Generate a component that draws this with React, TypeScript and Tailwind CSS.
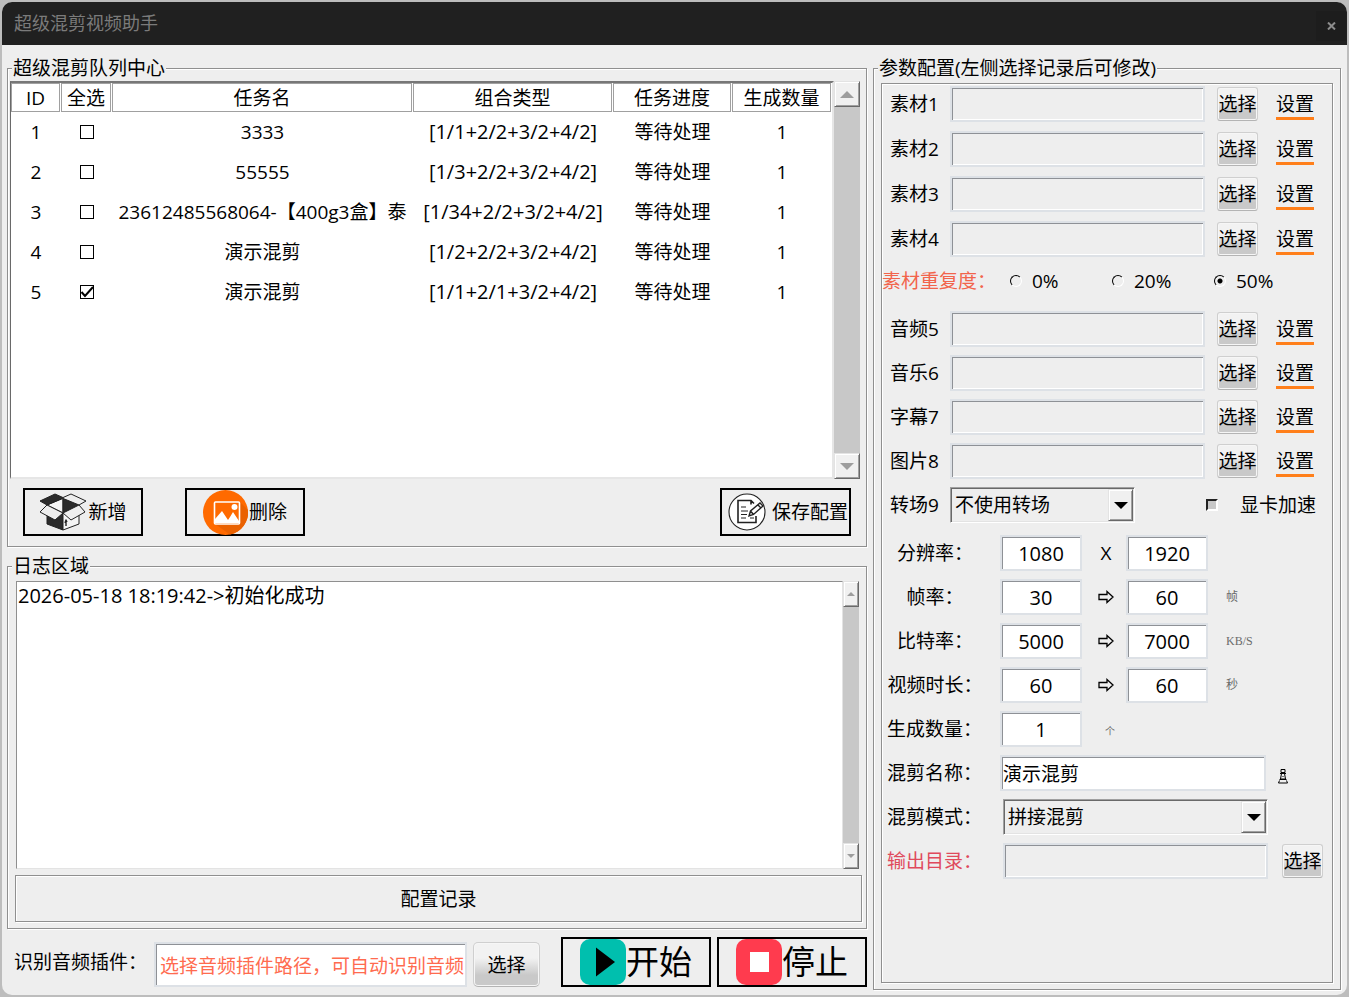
import { useState } from "react";
import type { ReactNode } from "react";

interface Task {
  id: number;
  name: string;
  combo: string;
  status: string;
  count: number;
}

const TASKS: Task[] = [
  { id: 1, name: "3333", combo: "[1/1+2/2+3/2+4/2]", status: "等待处理", count: 1 },
  { id: 2, name: "55555", combo: "[1/3+2/2+3/2+4/2]", status: "等待处理", count: 1 },
  { id: 3, name: "23612485568064-【400g3盒】泰", combo: "[1/34+2/2+3/2+4/2]", status: "等待处理", count: 1 },
  { id: 4, name: "演示混剪", combo: "[1/2+2/2+3/2+4/2]", status: "等待处理", count: 1 },
  { id: 5, name: "演示混剪", combo: "[1/1+2/1+3/2+4/2]", status: "等待处理", count: 1 },
];

const COLUMNS = [
  { title: "ID", width: "w-[50px]" },
  { title: "全选", width: "w-[51px]" },
  { title: "任务名", width: "w-[301px]" },
  { title: "组合类型", width: "w-[200px]" },
  { title: "任务进度", width: "w-[119px]" },
  { title: "生成数量", width: "w-auto" },
];

const MATERIALS = ["素材1", "素材2", "素材3", "素材4"];
const EXTRAS = ["音频5", "音乐6", "字幕7", "图片8"];
const RANGES = [
  { label: "分辨率：", from: "1080", to: "1920", unit: "" },
  { label: "帧率：", from: "30", to: "60", unit: "帧" },
  { label: "比特率：", from: "5000", to: "7000", unit: "KB/S" },
  { label: "视频时长：", from: "60", to: "60", unit: "秒" },
];

const SUNKEN =
  "border-2 border-[#dde1e6] shadow-[inset_1px_1px_0_#8e9196,inset_-1px_-1px_0_#fff] outline-none";
const RAISED =
  "border border-t-[#e3e3e3] border-l-[#e3e3e3] border-b-[#696969] border-r-[#696969] bg-[#f0f0f0] shadow-[inset_1px_1px_0_#fff,inset_-1px_-1px_0_#a0a0a0]";
const ETCHED = "border border-[#8f8f8f] shadow-[1px_1px_0_#fff,inset_1px_1px_0_#fff]";

function Group({ title, className, children }: { title: string; className?: string; children: ReactNode }) {
  return (
    <fieldset className={`flex min-w-0 flex-col ${ETCHED} ${className ?? ""}`}>
      <legend className="ml-1 bg-[#eeeeee] px-px leading-[22px]">{title}</legend>
      {children}
    </fieldset>
  );
}

function ScrollBar({ narrow }: { narrow?: boolean }) {
  const arrow = narrow ? "h-1 w-2" : "h-[7px] w-3.5";
  return (
    <div className={`flex shrink-0 flex-col justify-between bg-[#c8c8c8] ${narrow ? "w-4" : "w-[26px]"}`}>
      <button aria-label="向上滚动" className={`flex h-[26px] items-center justify-center ${RAISED}`}>
        <svg viewBox="0 0 14 7" className={arrow}><path d="M0 7 7 0l7 7z" fill="#9d9d9d" /></svg>
      </button>
      <button aria-label="向下滚动" className={`flex h-[26px] items-center justify-center ${RAISED}`}>
        <svg viewBox="0 0 14 7" className={arrow}><path d="M0 0h14L7 7z" fill="#9d9d9d" /></svg>
      </button>
    </div>
  );
}

function PickButton({ label }: { label: string }) {
  return (
    <button
      aria-label={label}
      className="h-[34px] w-[41px] shrink-0 rounded-[3px] border border-[#cfcfcf] border-b-[#b4b4b4] bg-linear-to-b from-[#f2f2f2] from-35% to-[#c9c9c9] to-75% whitespace-nowrap shadow-[inset_0_0_0_1px_#f6f6f6]"
    >
      选择
    </button>
  );
}

function FileRow({ label }: { label: string }) {
  return (
    <div className="flex h-9 items-center pr-[18px] pl-2">
      <label htmlFor={label} className="w-[60px] shrink-0">{label}</label>
      <input id={label} readOnly className={`h-9 min-w-0 flex-1 bg-[#eeeeee] px-1 ${SUNKEN}`} />
      <div className="ml-3 flex items-center gap-[18px]">
        <PickButton label={`选择${label}`} />
        <a href="#" className="border-b-3 border-[#ff7f1a] pt-0.5 leading-[26px] whitespace-nowrap">设置</a>
      </div>
    </div>
  );
}

function Dropdown({ id, options, className }: { id: string; options: string[]; className: string }) {
  return (
    <div className={`relative h-9 ${className}`}>
      <select
        id={id}
        className="h-full w-full appearance-none border border-t-[#a0a0a0] border-r-white border-b-white border-l-[#a0a0a0] bg-[#eeeeee] pr-7 pl-1 shadow-[inset_1px_1px_0_#696969,inset_-1px_-1px_0_#e3e3e3] outline-none"
      >
        {options.map(o => <option key={o}>{o}</option>)}
      </select>
      <div className={`pointer-events-none absolute inset-y-0.5 right-0.5 flex w-[25px] items-center justify-center ${RAISED}`}>
        <svg viewBox="0 0 14 7" className="h-[7px] w-3.5"><path d="M0 0h14L7 7z" /></svg>
      </div>
    </div>
  );
}

function NumberBox({ id, value, label }: { id?: string; value: string; label?: string }) {
  return (
    <input
      id={id}
      aria-label={label}
      defaultValue={value}
      className={`h-9 w-[82px] shrink-0 bg-white text-center text-[20px] ${SUNKEN}`}
    />
  );
}

function BoxIcon() {
  return (
    <svg viewBox="0 0 48 38" className="h-[38px] w-12" stroke="#222" strokeWidth="1" strokeLinejoin="round">
      <path d="M8 17v14l16 6V18z" fill="#2b2b2b" />
      <path d="M40 17v14l-16 6V18z" fill="#f5f5f5" />
      <path d="M24 5v15L8 12z" fill="#f5f5f5" />
      <path d="M24 5v15l16-8z" fill="#2b2b2b" />
      <path d="M1 8 16 1l9 4L8 12z" fill="#2b2b2b" />
      <path d="M23 5l9-4 15 7-7 4z" fill="#eee" />
      <path d="M8 12l16 8-8 7L1 19z" fill="#eee" />
      <path d="M40 12l-16 8 8 7 14-8z" fill="#eee" />
      <path d="M27 33v-5m-1 2 1-3 1 2" fill="none" strokeWidth="1.4" />
    </svg>
  );
}

function PictureIcon() {
  return (
    <svg viewBox="0 0 45 45" className="size-[45px]">
      <circle cx="22.5" cy="22.5" r="22.5" fill="#ff6a00" />
      <path d="M37 12 45 20A22.5 22.5 0 0 1 27 44.500L12 34z" fill="#ea6100" />
      <rect x="11.5" y="12" width="25" height="22" rx="1" fill="#ff6a00" stroke="#fff" strokeWidth="1.6" />
      <circle cx="31.500" cy="17" r="3" fill="#fff" />
      <path d="M12 33v-4l7-8 6 9 2-3 3-5 6 9v2z" fill="#fff" />
    </svg>
  );
}

function SaveIcon() {
  return (
    <svg viewBox="0 0 38 38" className="size-[38px]" fill="none" stroke="#222" strokeWidth="1.4">
      <circle cx="19" cy="19" r="18" fill="#fff" strokeWidth="1.1" />
      <path d="M28 23v6.500H10V7.500h13l3 3M23 7.500v4" strokeWidth="1.6" />
      <path d="M13 14h5M13 18h7M13 21.500h6M13 25h5M22 25h4" strokeWidth="1.2" />
      <path d="M21 23l1.500-5L32 10l3 3-9.500 8.500zM30 12l3 3M22.500 18l3 3.500" fill="#fff" />
    </svg>
  );
}

function ArrowIcon() {
  return (
    <svg viewBox="0 0 16 14" className="h-3.5 w-4" fill="none" stroke="#000" strokeWidth="1.3">
      <path d="M1 4.500h8V1.500L15 7l-6 5.500v-3H1z" />
    </svg>
  );
}

function PawnIcon() {
  return (
    <svg viewBox="0 0 10 16" className="h-4 w-2.5" fill="none" stroke="#000">
      <path d="M3 1.500h4v3H3zM2 5.500h6M3.500 5.500 2.500 11h5l-1-5.500M4.500 8.500h1M1.500 11.500h7M1.500 12.500l-1 2.500h9l-1-2.500" />
    </svg>
  );
}

export default function App() {
  const [selected, setSelected] = useState<number[]>([5]);
  const [repeat, setRepeat] = useState("50%");

  const toggle = (id: number) => {
    setSelected(s => (s.includes(id) ? s.filter(x => x !== id) : [...s, id]));
  };

  return (
    <div
      lang="zh-CN"
      className="flex min-h-screen bg-[#bdbdbd] p-0.5 font-['Open_Sans','Noto_Sans_CJK_SC',sans-serif] text-[19px] leading-6 text-black"
    >
      <div className="flex min-w-0 flex-1 flex-col overflow-hidden rounded-[10px] bg-[#eeeeee]">
        <header className="flex h-[43px] items-center justify-between bg-[#202020] pr-px pb-0.5 pl-3">
          <h1 className="text-[18px] text-[#7b7b7b]">超级混剪视频助手</h1>
          <button aria-label="关闭" className="mt-1.5 flex size-[30px] items-center justify-center bg-[#1d1d1d]">
            <svg viewBox="0 0 9 8" className="h-2 w-[9px]" stroke="#8c8c8c" strokeWidth="2">
              <path d="M1 .5 8 7.500M8 .5 1 7.500" />
            </svg>
          </button>
        </header>

        <main className="flex flex-1 gap-1.5 pt-3 pr-1.5 pl-[5px]">
          <div className="flex min-w-0 flex-1 flex-col pb-2">
            {/* Task queue */}
            <Group title="超级混剪队列中心">
              <div className="flex h-[400px] pt-0.5 pr-1.5 pl-0.5">
                <div className="min-w-0 flex-1 overflow-hidden border-y-2 border-r-2 border-l border-t-[#777] border-r-[#e6e6e6] border-b-[#e6e6e6] border-l-[#696969] bg-white">
                  <table className="w-full table-fixed border-separate border-spacing-0 text-center">
                    <thead>
                      <tr>
                        {COLUMNS.map(c => (
                          <th key={c.title} className={`p-0 pr-px font-normal ${c.width}`}>
                            <div className="border border-[#a0a0a0] pt-px leading-[26px] whitespace-nowrap">{c.title}</div>
                          </th>
                        ))}
                      </tr>
                    </thead>
                    <tbody>
                      {TASKS.map(t => (
                        <tr key={t.id} className="h-10">
                          <td className="p-0">{t.id}</td>
                          <td className="p-0">
                            <span className="relative mx-auto block size-3.5">
                              <input
                                type="checkbox"
                                aria-label={`选择任务${t.id}`}
                                checked={selected.includes(t.id)}
                                onChange={() => toggle(t.id)}
                                className="peer block size-3.5 appearance-none border border-black bg-white"
                              />
                              <svg
                                viewBox="0 0 14 14"
                                className="pointer-events-none absolute inset-0 hidden size-3.5 peer-checked:block"
                                fill="none"
                                stroke="#000"
                                strokeWidth="2"
                              >
                                <path d="M1.500 7 5 11l8-9" />
                              </svg>
                            </span>
                          </td>
                          <td className="overflow-hidden p-0 whitespace-nowrap">{t.name}</td>
                          <td className="p-0 text-[20px] whitespace-nowrap">{t.combo}</td>
                          <td className="p-0 whitespace-nowrap">{t.status}</td>
                          <td className="p-0">{t.count}</td>
                        </tr>
                      ))}
                    </tbody>
                  </table>
                </div>
                <ScrollBar />
              </div>
              <div className="flex gap-[42px] pt-[9px] pr-[15px] pb-2.5 pl-[15px]">
                <button className="flex h-12 w-[120px] items-center justify-center gap-px border-2 border-black whitespace-nowrap">
                  <BoxIcon />
                  新增
                </button>
                <button className="flex h-12 w-[120px] items-center justify-center gap-px border-2 border-black whitespace-nowrap">
                  <PictureIcon />
                  删除
                </button>
                <button className="ml-auto flex h-12 w-[131px] items-center gap-1.5 border-2 border-black pl-1.5 whitespace-nowrap">
                  <SaveIcon />
                  保存配置
                </button>
              </div>
            </Group>

            {/* Log */}
            <Group title="日志区域" className="mt-2 flex-1">
              <div className="flex h-full flex-col pt-1 pr-1 pb-1.5 pl-[7px]">
                <div className="flex min-h-[280px] flex-1 pr-[3px] pl-px">
                  <textarea
                    readOnly
                    aria-label="日志区域"
                    defaultValue="2026-05-18 18:19:42->初始化成功"
                    className="min-w-0 flex-1 resize-none overflow-hidden border border-t-[#8f8f8f] border-r-[#e3e3e3] border-b-[#e3e3e3] border-l-[#8f8f8f] bg-white px-px py-0.5 text-[20px] outline-none"
                  />
                  <ScrollBar narrow />
                </div>
                <button className={`mt-1.5 h-[47px] w-full ${ETCHED}`}>配置记录</button>
              </div>
            </Group>

            {/* Audio plugin and run controls */}
            <div className="mt-2 flex items-end gap-1.5 pl-[7px]">
              <label htmlFor="plugin" className="w-[134px] shrink-0 self-center whitespace-nowrap">识别音频插件：</label>
              <input
                id="plugin"
                defaultValue="选择音频插件路径，可自动识别音频"
                className={`h-[45px] min-w-0 flex-1 bg-white pl-1 text-[#ff6b4f] ${SUNKEN}`}
              />
              <button className="h-[45px] w-[67px] rounded-[5px] border border-[#cfcfcf] border-b-[#b4b4b4] bg-linear-to-b from-[#f2f2f2] from-35% to-[#c9c9c9] to-75% shadow-[inset_0_0_0_1px_#f6f6f6]">
                选择
              </button>
              <button className="ml-[15px] flex h-[50px] w-[150px] items-center justify-center border-2 border-black text-[33px] whitespace-nowrap">
                <svg viewBox="0 0 46 46" className="size-[46px]">
                  <rect width="46" height="46" rx="10" fill="#00bfae" />
                  <path d="M16 8.500 35 23 16 37.500z" />
                </svg>
                开始
              </button>
              <button className="flex h-[50px] w-[150px] items-center justify-center border-2 border-black text-[33px] whitespace-nowrap">
                <svg viewBox="0 0 46 46" className="size-[46px]">
                  <rect width="46" height="46" rx="10" fill="#ff3b4e" />
                  <rect x="14" y="13" width="19" height="20" fill="#fff" />
                </svg>
                停止
              </button>
            </div>
          </div>

          {/* Parameters */}
          <div className="flex w-[468px] shrink-0 flex-col pb-[5px]">
            <Group title="参数配置(左侧选择记录后可修改)" className="flex-1">
              <div className={`mx-[7px] mt-1 mb-1.5 flex-1 pt-0.5 ${ETCHED}`}>
                <div className="flex flex-col gap-[9px]">
                  {MATERIALS.map(m => <FileRow key={m} label={m} />)}
                </div>

                <div role="radiogroup" aria-label="素材重复度" className="mt-1.5 flex h-9 items-center">
                  <span className="mr-3.5 w-[114px] shrink-0 whitespace-nowrap text-[#f2644b]">素材重复度：</span>
                  {["0%", "20%", "50%"].map(v => (
                    <label key={v} className="flex w-[102px] items-center gap-2.5">
                      <input
                        type="radio"
                        name="repeat"
                        checked={repeat === v}
                        onChange={() => setRepeat(v)}
                        className="size-3 appearance-none rounded-full border border-t-black border-r-white border-b-white border-l-black checked:bg-[radial-gradient(circle,#000_2px,transparent_3px)]"
                      />
                      {v}
                    </label>
                  ))}
                </div>

                <div className="mt-3 flex flex-col gap-2">
                  {EXTRAS.map(m => <FileRow key={m} label={m} />)}
                  <div className="flex h-9 items-center pl-2">
                    <label htmlFor="transition" className="w-[60px] shrink-0">转场9</label>
                    <Dropdown id="transition" options={["不使用转场", "使用转场"]} className="w-[185px]" />
                    <label className="mr-4 ml-auto flex items-center gap-[22px] whitespace-nowrap">
                      <input
                        type="checkbox"
                        className="size-3 appearance-none border-2 border-t-[#222] border-r-white border-b-white border-l-[#222] bg-[#c8c8c8] checked:bg-black"
                      />
                      显卡加速
                    </label>
                  </div>
                </div>

                <div className="mt-3 flex flex-col gap-2 pl-[5px]">
                  {RANGES.map(r => (
                    <div key={r.label} className="flex h-9 items-center">
                      <label htmlFor={r.label} className="mr-[17px] w-24 shrink-0 text-center whitespace-nowrap">{r.label}</label>
                      <NumberBox id={r.label} value={r.from} />
                      <span className="flex w-11 justify-center pl-1">{r.unit ? <ArrowIcon /> : "X"}</span>
                      <NumberBox value={r.to} label={`${r.label}上限`} />
                      <span className="ml-[18px] font-['Liberation_Serif','Noto_Sans_CJK_SC',serif] text-xs text-[#6b6b6b]">{r.unit}</span>
                    </div>
                  ))}
                  <div className="flex h-9 items-center">
                    <label htmlFor="count" className="mr-[17px] w-24 shrink-0 whitespace-nowrap">生成数量：</label>
                    <NumberBox id="count" value="1" />
                    <span className="flex w-11 justify-center pt-1 pl-3 text-[10px] text-[#6b6b6b]">个</span>
                  </div>
                  <div className="flex h-9 items-center">
                    <label htmlFor="mix-name" className="mr-[17px] w-24 shrink-0 whitespace-nowrap">混剪名称：</label>
                    <input id="mix-name" defaultValue="演示混剪" className={`h-9 min-w-0 flex-1 bg-white px-px ${SUNKEN}`} />
                    <div className="w-[66px] shrink-0 pt-1.5 pl-3"><PawnIcon /></div>
                  </div>
                  <div className="flex h-9 items-center">
                    <label htmlFor="mode" className="mr-5 w-24 shrink-0 whitespace-nowrap">混剪模式：</label>
                    <Dropdown id="mode" options={["拼接混剪", "随机混剪"]} className="min-w-0 flex-1" />
                    <div className="w-16 shrink-0" />
                  </div>
                  <div className="flex h-9 items-center">
                    <label htmlFor="output" className="mr-5 w-24 shrink-0 whitespace-nowrap text-[#e04a5c]">输出目录：</label>
                    <input id="output" readOnly className={`h-9 min-w-0 flex-1 bg-[#eeeeee] px-1 ${SUNKEN}`} />
                    <div className="w-16 shrink-0 pl-3.5"><PickButton label="选择输出目录" /></div>
                  </div>
                </div>
              </div>
            </Group>
          </div>
        </main>
      </div>
    </div>
  );
}
